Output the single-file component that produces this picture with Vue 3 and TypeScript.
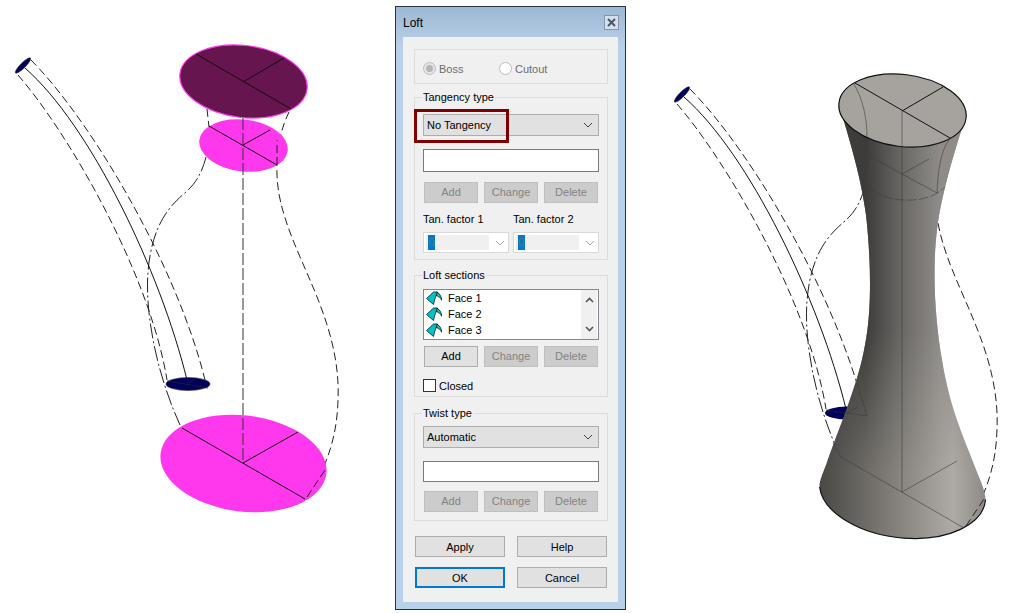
<script setup lang="ts">
// all sketch curves are in the left figure's coordinates, the right figure reuses them with a translate
const solidPath = "M25 68 C90 125 160 270 187 380";

const dashedPaths = [
  "M31 60 C95 125 178 270 205 380",
  "M18 75 C70 135 150 275 167 380",
  "M207 109 L209 127",
  "M289 112 C281 128 276 150 277 175 C278 210 295 245 310 280 C325 315 340 355 338 400 C337 440 325 470 307 497",
];

const dashDotPath = "M206 157 C202 172 197 182 186 192 C172 204 152 222 148 272 C145 310 155 370 180 425";

const bodyPath =
  "M839.5 105 C846 130 860 170 866 215 C871 260 872 310 865 345 C858 385 838 430 826 465 C822 475 819 482 819.6 487 A83.5 47 7 0 0 985.5 499.5 C985 490 981 482 977 472 C965 440 950 410 942 360 C935 320 932 270 937 230 C941 195 955 150 965.5 117 Z";

const faces = ["Face 1", "Face 2", "Face 3"];
const actions = ["Add", "Change", "Delete"];
</script>

<template>
  <div class="page">
    <svg class="left-sketch" viewBox="0 0 395 613" width="395" height="613">
      <path v-for="d in dashedPaths" :key="d" :d="d" class="guide" />
      <path :d="dashDotPath" class="guide-dot" />
      <path :d="solidPath" class="solid" />

      <ellipse cx="243.5" cy="81.5" rx="64" ry="36" transform="rotate(7 243.5 81.5)" fill="#66154f" stroke="#ff38ee" stroke-width="1.2" />
      <path d="M196 54 L291 109 M243 82 L284 58" class="solid" />

      <ellipse cx="243.5" cy="145.5" rx="44.5" ry="26" transform="rotate(7 243.5 145.5)" fill="#ff38ee" />
      <path d="M209 126 L277 165 M243 145 L270 130" class="solid" />

      <ellipse cx="243.5" cy="463.5" rx="83.5" ry="48" transform="rotate(7 243.5 463.5)" fill="#ff38ee" />
      <path d="M182 428 L305 499 M243 463 L298 432" class="solid" />

      <path d="M243 118 L243 462" class="center-guide" />
      <path d="M307 497 L327 467" class="guide" />
      <path d="M277 165 L277 140" class="guide" />

      <ellipse cx="23" cy="65.5" rx="10.5" ry="2.6" transform="rotate(-45 23 65.5)" fill="#00005f" stroke="#222" stroke-width="0.6" />
      <ellipse cx="188" cy="384" rx="22" ry="6.5" fill="#00005f" stroke="#333" stroke-width="0.6" />
      <path d="M167 381 L208 388 M187 384 L197 378" class="thin" />
    </svg>

    <div class="dialog">
      <div class="titlebar">
        <span class="title">Loft</span>
        <button class="close" type="button" aria-label="Close">
          <svg width="9" height="9" viewBox="0 0 9 9">
            <path d="M1 1 L8 8 M8 1 L1 8" stroke="#4d5863" stroke-width="2" fill="none" />
          </svg>
        </button>
      </div>

      <div class="content">
        <div class="group group--mode">
          <span class="option">
            <span class="radio radio--on"></span>
            Boss
          </span>
          <span class="option">
            <span class="radio"></span>
            Cutout
          </span>
        </div>

        <div class="group group--tangency">
          <span class="legend">Tangency type</span>
          <div class="select">
            <span>No Tangency</span>
            <svg class="chevron" width="10" height="6" viewBox="0 0 10 6"><path d="M1 1 L5 5 L9 1" /></svg>
          </div>
          <span class="highlight"></span>
          <div class="input"></div>
          <div class="actions">
            <button v-for="a in actions" :key="a" class="btn btn--disabled" type="button">{{ a }}</button>
          </div>
          <div class="factors">
            <div v-for="n in 2" :key="n" class="factor">
              <span class="factor-label">Tan. factor {{ n }}</span>
              <div class="combo">
                <div class="combo-field"><span class="combo-value">0</span></div>
                <svg class="chevron chevron--dim" width="10" height="6" viewBox="0 0 10 6"><path d="M1 1 L5 5 L9 1" /></svg>
              </div>
            </div>
          </div>
        </div>

        <div class="group group--sections">
          <span class="legend">Loft sections</span>
          <div class="list">
            <div class="rows">
              <div v-for="f in faces" :key="f" class="row">
                <svg width="16" height="16" viewBox="0 0 16 16">
                  <path d="M10.5 2 C13.5 3 15.5 6.5 16 10.5 C14.5 8 12.5 6 10 5.5 Z" fill="#00c4c4" stroke="#000" stroke-width="0.7" stroke-linejoin="round" />
                  <path d="M0.5 8.5 L7.5 2 L11.5 2 C10 5 8.5 10 7.5 14.5 Z" fill="#00c4c4" stroke="#000" stroke-width="0.7" stroke-linejoin="round" />
                </svg>
                <span>{{ f }}</span>
              </div>
            </div>
            <div class="scrollbar">
              <svg width="9" height="6" viewBox="0 0 9 6"><path d="M1 5 L4.5 1.5 L8 5" /></svg>
              <svg width="9" height="6" viewBox="0 0 9 6"><path d="M1 1 L4.5 4.5 L8 1" /></svg>
            </div>
          </div>
          <div class="actions actions--list">
            <button v-for="a in actions" :key="a" class="btn" :class="{ 'btn--disabled': a !== 'Add' }" type="button">{{ a }}</button>
          </div>
          <label class="closed">
            <span class="checkbox"></span>
            Closed
          </label>
        </div>

        <div class="group group--twist">
          <span class="legend">Twist type</span>
          <div class="select">
            <span>Automatic</span>
            <svg class="chevron" width="10" height="6" viewBox="0 0 10 6"><path d="M1 1 L5 5 L9 1" /></svg>
          </div>
          <div class="input input--short"></div>
          <div class="actions actions--short">
            <button v-for="a in actions" :key="a" class="btn btn--disabled" type="button">{{ a }}</button>
          </div>
        </div>

        <div class="footer">
          <button class="btn btn--wide" type="button">Apply</button>
          <button class="btn btn--wide" type="button">Help</button>
          <button class="btn btn--wide btn--default" type="button">OK</button>
          <button class="btn btn--wide" type="button">Cancel</button>
        </div>
      </div>
    </div>

    <svg class="right-sketch" viewBox="626 0 388 613" width="388" height="613">
      <defs>
        <linearGradient id="baseShade" gradientUnits="userSpaceOnUse" x1="820" y1="0" x2="986" y2="0">
          <stop offset="0" stop-color="#4a4845" />
          <stop offset="0.35" stop-color="#77746f" />
          <stop offset="0.8" stop-color="#aeaaa5" />
          <stop offset="1" stop-color="#8d8a86" />
        </linearGradient>
        <linearGradient id="neckShade" gradientUnits="userSpaceOnUse" x1="866" y1="0" x2="940" y2="0">
          <stop offset="0" stop-color="#3d3c3a" />
          <stop offset="0.5" stop-color="#6b6966" />
          <stop offset="1" stop-color="#8f8c88" />
        </linearGradient>
        <linearGradient id="neckFade" gradientUnits="userSpaceOnUse" x1="0" y1="330" x2="0" y2="470">
          <stop offset="0" stop-color="#fff" />
          <stop offset="1" stop-color="#000" />
        </linearGradient>
        <mask id="neckMask" maskUnits="userSpaceOnUse" x="800" y="60" width="200" height="500">
          <rect x="800" y="60" width="200" height="500" fill="url(#neckFade)" />
        </mask>
      </defs>

      <g transform="translate(659 29)">
        <path v-for="d in dashedPaths" :key="d" :d="d" class="guide" />
        <path :d="dashDotPath" class="guide-dot" />
        <path :d="solidPath" class="solid" />
        <ellipse cx="23" cy="65.5" rx="10.5" ry="2.6" transform="rotate(-45 23 65.5)" fill="#00005f" stroke="#222" stroke-width="0.6" />
        <ellipse cx="188" cy="384" rx="22" ry="6.5" fill="#00005f" />
        <path d="M167 381 L208 388" class="thin" />
      </g>

      <path :d="bodyPath" fill="url(#baseShade)" />
      <path :d="bodyPath" fill="url(#neckShade)" mask="url(#neckMask)" />
      <path d="M819.6 487 A83.5 47 7 0 0 985.5 499.5" class="edge" />

      <!-- hidden lines showing through the surface -->
      <path d="M902 147 L902 492 M841 457 L964 528 M902 492 L957 461 M833 443 L841 457" class="ghost" />
      <path d="M868 155 L902 174 L937 193 M902 174 L929 159" class="ghost" />
      <path d="M867 137 C868 150 867 165 863 183 M949 140 C941 150 938 170 937 193" class="ghost" />
      <path d="M863 183 C875 194 890 200 903 200 C920 201 935 197 945 187" class="ghost ghost--dash" />
      <path d="M857 383 L867 416 L847 413 L858 407" class="ghost" />

      <ellipse cx="902.5" cy="110.5" rx="64" ry="36" transform="rotate(7 902.5 110.5)" fill="#a6a29e" stroke="#111" stroke-width="1.2" />
      <path d="M855 83 L950 138 M902 111 L943 87" class="solid" />
      <path d="M854 84 C863 100 867 118 867 137 M902 111 L902 147" class="ghost" />
      <path d="M966 526 L986 496" class="guide" />
    </svg>
  </div>
</template>

<style scoped>
.page {
  display: flex;
  align-items: flex-start;
  width: 1014px;
  height: 613px;
  background: #fff;
  font-family: "Liberation Sans", Arial, sans-serif;
  font-size: 11px;
  color: #000;
  overflow: hidden;
}

.left-sketch,
.right-sketch {
  display: block;
  flex: none;
}

.guide,
.guide-dot,
.center-guide,
.solid,
.thin,
.edge,
.ghost {
  fill: none;
}

.guide {
  stroke: #222;
  stroke-width: 1;
  stroke-dasharray: 8 4;
}

.guide-dot {
  stroke: #222;
  stroke-width: 1;
  stroke-dasharray: 15 3 2 3;
}

.center-guide {
  stroke: #333;
  stroke-width: 1;
  stroke-dasharray: 12 3;
}

.solid {
  stroke: #111;
  stroke-width: 1;
}

.thin {
  stroke: #222;
  stroke-width: 0.8;
}

.edge {
  stroke: #111;
  stroke-width: 1.2;
}

.ghost {
  stroke: #3a3936;
  stroke-width: 0.8;
  stroke-opacity: 0.7;
}

.ghost--dash {
  stroke-dasharray: 10 2;
}

/* dialog */
.dialog {
  flex: none;
  box-sizing: border-box;
  width: 231px;
  height: 604px;
  margin-top: 6px;
  padding: 0 7px 7px;
  border: 1px solid #24323f;
  background: linear-gradient(#9db8d4, #b9d1e8 40px);
}

.titlebar {
  display: flex;
  align-items: center;
  justify-content: space-between;
  height: 30px;
  padding-top: 1px;
  box-sizing: border-box;
}

.title {
  font-size: 12px;
}

.close {
  display: flex;
  align-items: center;
  justify-content: center;
  width: 15px;
  height: 15px;
  padding: 0;
  margin-right: -1px;
  border: 1px solid #8395a8;
  background: #d3e0ee;
}

.content {
  box-sizing: border-box;
  height: 565px;
  padding: 12px 10px 0 11px;
  background: #f0f0f0;
}

.group {
  position: relative;
  box-sizing: border-box;
  border: 1px solid #dcdcdc;
  padding: 0 8px;
}

.legend {
  position: absolute;
  top: -7px;
  left: 7px;
  padding: 0 1px;
  line-height: 13px;
  background: #f0f0f0;
}

.group--mode {
  display: flex;
  align-items: center;
  height: 35px;
  padding-top: 4px;
  color: #6d6d6d;
}

.option {
  display: flex;
  align-items: center;
  gap: 3px;
  width: 76px;
}

.radio {
  box-sizing: border-box;
  display: flex;
  align-items: center;
  justify-content: center;
  width: 13px;
  height: 13px;
  border: 1px solid #bcbcbc;
  border-radius: 50%;
  background: #fff;
}

.radio--on {
  background: #e6e6e6;
}

.radio--on::after {
  content: "";
  width: 7px;
  height: 7px;
  border-radius: 50%;
  background: #b5b5b5;
}

.group--tangency {
  height: 163px;
  margin-top: 13px;
  padding-top: 16px;
}

.group--sections {
  height: 122px;
  margin-top: 15px;
  padding-top: 13px;
}

.group--twist {
  height: 108px;
  margin-top: 16px;
  padding-top: 12px;
}

.select {
  box-sizing: border-box;
  display: flex;
  align-items: center;
  justify-content: space-between;
  height: 22px;
  padding: 0 4px 0 3px;
  border: 1px solid #adadad;
  background: #e1e1e1;
}

.chevron {
  fill: none;
  stroke: #444;
  stroke-width: 1;
  margin-right: 1px;
}

.chevron--dim {
  stroke: #a8a8a8;
  margin-right: -1px;
}

.highlight {
  position: absolute;
  top: 11px;
  left: -1px;
  box-sizing: border-box;
  width: 95px;
  height: 34px;
  border: 3px solid #7f0000;
}

.input {
  box-sizing: border-box;
  height: 23px;
  margin-top: 13px;
  border: 1px solid #7a7a7a;
  background: #fff;
}

.input--short {
  height: 21px;
}

.actions {
  display: flex;
  gap: 6px;
  margin-top: 10px;
  padding-left: 1px;
}

.actions .btn {
  padding-bottom: 2px;
}

.actions--list {
  margin-top: 6px;
}

.actions--short {
  margin-top: 9px;
}

.btn {
  box-sizing: border-box;
  width: 54px;
  height: 21px;
  padding: 0;
  border: 1px solid #adadad;
  background: #e1e1e1;
  font: inherit;
  color: #000;
}

.btn--disabled {
  border-color: #bfbfbf;
  background: #cccccc;
  color: #838383;
}

.factors {
  display: flex;
  gap: 4px;
  margin-top: 9px;
}

.factor {
  display: flex;
  flex-direction: column;
  gap: 6px;
}

.factor-label {
  line-height: 14px;
}

.combo {
  box-sizing: border-box;
  display: flex;
  align-items: center;
  justify-content: space-between;
  width: 86px;
  height: 21px;
  padding: 1px 4px 1px 2px;
  border: 1px solid #d9d9d9;
  background: #fff;
}

.combo-field {
  display: flex;
  align-items: center;
  width: 63px;
  height: 15px;
  padding-left: 2px;
  box-sizing: border-box;
  background: #f0f0f0;
}

.combo-value {
  width: 7px;
  line-height: 15px;
  background: #0078d7;
  color: #6d6d6d;
}

.list {
  box-sizing: border-box;
  display: flex;
  height: 51px;
  padding: 0 1px;
  border: 1px solid #828790;
  background: #fff;
}

.rows {
  flex: 1;
}

.row {
  display: flex;
  align-items: center;
  gap: 6px;
  height: 16px;
  padding-left: 1px;
}

.scrollbar {
  display: flex;
  flex-direction: column;
  align-items: center;
  justify-content: space-between;
  width: 16px;
  padding: 7px 0;
  box-sizing: border-box;
  background: #f0f0f0;
}

.scrollbar svg {
  fill: none;
  stroke: #555;
  stroke-width: 1.6;
}

.closed {
  display: flex;
  align-items: center;
  gap: 3px;
  margin-top: 12px;
}

.checkbox {
  box-sizing: border-box;
  width: 13px;
  height: 13px;
  border: 1px solid #333;
  background: #fff;
}

.footer {
  display: grid;
  grid-template-columns: 90px 90px;
  justify-content: space-between;
  row-gap: 10px;
  margin: 15px 1px 0 1px;
}

.btn--wide {
  width: 90px;
}

.btn--default {
  border: 2px solid #0078d7;
}
</style>

<style>
html,
body {
  background: #fff;
}
</style>
